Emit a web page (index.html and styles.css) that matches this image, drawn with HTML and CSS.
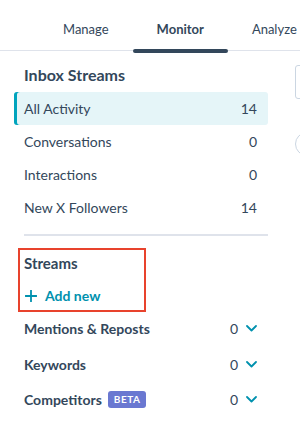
FILE: index.html
```html
<!DOCTYPE html>
<html>
<head>
<meta charset="utf-8">
<link rel="stylesheet" href="styles.css">
</head>
<body>
<div class="page">
  <nav class="tabs">
    <div class="tab">Manage</div>
    <div class="tab active">Monitor</div>
    <div class="tab">Analyze</div>
  </nav>
  <div class="content">
    <aside class="sidebar">
      <h2 class="heading">Inbox Streams</h2>
      <ul class="list">
        <li class="row selected"><span>All Activity</span><span>14</span></li>
        <li class="row"><span>Conversations</span><span>0</span></li>
        <li class="row"><span>Interactions</span><span>0</span></li>
        <li class="row"><span>New X Followers</span><span>14</span></li>
      </ul>
      <div class="divider"></div>
      <div class="highlight-box">
        <h2 class="heading small">Streams</h2>
        <div class="add-new">
          <svg class="plus" width="12" height="12" viewBox="0 0 12 12"><path d="M6 0.5v11M0.5 6h11" stroke="#0091ae" stroke-width="1.8" fill="none" stroke-linecap="round"/></svg>
          <span>Add new</span>
        </div>
      </div>
      <ul class="streams">
        <li class="stream"><span class="stream-name">Mentions &amp; Reposts</span><span class="stream-count">0<svg class="chev" width="11" height="7" viewBox="0 0 11 7"><path d="M1 1l4.5 4.5L10 1" stroke="#0091ae" stroke-width="1.8" fill="none" stroke-linecap="round" stroke-linejoin="round"/></svg></span></li>
        <li class="stream"><span class="stream-name">Keywords</span><span class="stream-count">0<svg class="chev" width="11" height="7" viewBox="0 0 11 7"><path d="M1 1l4.5 4.5L10 1" stroke="#0091ae" stroke-width="1.8" fill="none" stroke-linecap="round" stroke-linejoin="round"/></svg></span></li>
        <li class="stream"><span class="stream-name">Competitors <span class="beta">BETA</span></span><span class="stream-count">0<svg class="chev" width="11" height="7" viewBox="0 0 11 7"><path d="M1 1l4.5 4.5L10 1" stroke="#0091ae" stroke-width="1.8" fill="none" stroke-linecap="round" stroke-linejoin="round"/></svg></span></li>
      </ul>
    </aside>
    <main class="main">
      <div class="search-box"></div>
      <div class="circle"></div>
    </main>
  </div>
</div>
</body>
</html>
```
FILE: styles.css
```css
* { box-sizing: border-box; }
html, body { margin: 0; padding: 0; background: #fff; }
body {
  font-family: "Lato", "Liberation Sans", sans-serif;
  color: #33475b;
  width: 300px;
  height: 434px;
  overflow: hidden;
}
.page { width: 300px; overflow: hidden; }
.tabs {
  display: flex;
  height: 51px;
  padding-left: 39px;
  border-bottom: 1px solid #dfe3eb;
  white-space: nowrap;
}
.tab {
  position: relative;
  flex: none;
  padding: 20px 24px 0;
  font-size: 13px;
  line-height: 18px;
  color: #33475b;
}
.tab.active { font-weight: 700; }
.tab.active::after {
  content: "";
  position: absolute;
  left: 0; right: 0;
  bottom: -3px;
  height: 4px;
  border-radius: 2px;
  background: #33475b;
}
.content { display: flex; }
.sidebar {
  width: 254px;
  margin-left: 14px;
  flex: none;
}
.heading {
  margin: 0;
  padding: 14px 0 0 10px;
  font-size: 16px;
  line-height: 20px;
  font-weight: 700;
  height: 41px;
}
.list { list-style: none; margin: 0; padding: 0; }
.row {
  display: flex;
  justify-content: space-between;
  align-items: center;
  height: 33px;
  padding: 0 11px 0 10px;
  font-size: 14px;
}
.row.selected {
  background: #e5f5f8;
  border-radius: 3px;
  box-shadow: inset 3px 0 0 #00a4bd;
}
.divider {
  height: 2px;
  background: #dfe3eb;
  margin: 10px 0 0 10px;
}
.highlight-box {
  width: 128px;
  height: 64px;
  margin: 12px 0 0 4px;
  border: 2px solid #e8432d;
}
.heading.small {
  padding: 3px 0 0 4px;
  height: 37px;
  font-size: 15px;
}
.add-new {
  display: flex;
  align-items: center;
  gap: 8px;
  padding-left: 5px;
  font-size: 14px;
  line-height: 18px;
  font-weight: 700;
  color: #0091ae;
}
.streams { list-style: none; margin: -1px 0 0; padding: 0; }
.stream {
  display: flex;
  justify-content: space-between;
  align-items: center;
  height: 35.5px;
  padding: 0 11px 0 10px;
  font-size: 14px;
  font-weight: 700;
}
.stream-name { display: flex; align-items: center; gap: 6px; }
.stream-count {
  display: flex;
  align-items: center;
  gap: 8px;
  font-weight: 400;
}
.beta {
  display: inline-block;
  background: #6a78d1;
  color: #fff;
  font-size: 10px;
  font-weight: 700;
  letter-spacing: 0.5px;
  line-height: 17px;
  padding: 0 6px;
  border-radius: 3px;
}
.main {
  margin-left: 27px;
  padding-top: 14px;
  display: flex;
  flex-direction: column;
  gap: 33px;
}
.search-box {
  width: 40px;
  height: 34px;
  border: 1px solid #cbd6e2;
  border-radius: 3px;
}
.circle {
  width: 24px;
  height: 24px;
  border: 1px solid #cbd6e2;
  border-radius: 50%;
}
```
